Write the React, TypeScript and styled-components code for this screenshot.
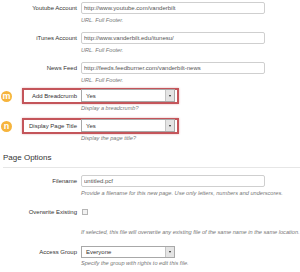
import styled, { createGlobalStyle, css } from 'styled-components';

const GlobalStyle = createGlobalStyle`
  html, body {
    margin: 0;
    padding: 0;
    background: #fff;
  }
  body {
    font-family: "Liberation Sans", Arial, sans-serif;
    width: 300px;
    height: 272px;
    overflow: hidden;
  }
`;

const Page = styled.div`
  width: 300px;
  padding-top: 2px;
`;

const Group = styled.div<{ $after: number }>`
  display: flex;
  flex-direction: column;
  margin-bottom: ${p => p.$after}px;
`;

const Row = styled.div`
  display: flex;
  align-items: center;
`;

const Marker = styled.div`
  width: 22px;
  display: flex;
  align-items: center;
  padding-left: 1px;
  box-sizing: border-box;
`;

const Badge = styled.span`
  width: 11px;
  height: 11px;
  border-radius: 50%;
  background: #f6b43c;
  color: #fff;
  font-size: 9px;
  font-weight: bold;
  line-height: 10px;
  text-align: center;
`;

const Field = styled.div<{ $marked?: boolean; $height?: number }>`
  display: flex;
  align-items: center;
  ${p => p.$height && css`height: ${p.$height}px;`}
  ${p => p.$marked && css`
    padding: 1px 4px 2px 0;
    box-shadow: inset 0 0 0 2px #c4555a, 0 0 2px rgba(196, 85, 90, 0.45);
  `}
`;

const Label = styled.label`
  width: 59px;
  padding-right: 4px;
  box-sizing: border-box;
  text-align: right;
  font-size: 6px;
  color: #333;
  white-space: nowrap;
`;

const TextInput = styled.input`
  width: 184px;
  height: 12px;
  box-sizing: border-box;
  border: 1px solid #cfcfcf;
  border-radius: 2px;
  padding: 0 2px;
  margin: 0;
  font-family: "Liberation Sans", Arial, sans-serif;
  font-size: 6px;
  color: #555;
  background: #fff;
  outline: none;
`;

const Select = styled.div<{ $height: number }>`
  width: 94px;
  height: ${p => p.$height}px;
  box-sizing: border-box;
  border: 1px solid #a8a8a8;
  display: flex;
  align-items: stretch;
  background: #fff;
`;

const SelectValue = styled.span`
  flex: 1;
  padding-left: 4px;
  font-size: 6px;
  color: #333;
  display: flex;
  align-items: center;
`;

const SelectButton = styled.span`
  width: 8px;
  background: #e4e4e4;
  border-left: 1px solid #c4c4c4;
  display: flex;
  align-items: center;
  justify-content: center;
  &::after {
    content: "";
    border-left: 1.5px solid transparent;
    border-right: 1.5px solid transparent;
    border-top: 2px solid #222;
  }
`;

const Checkbox = styled.span`
  width: 6px;
  height: 6px;
  margin-left: 1px;
  border: 1px solid #b5b5b5;
  background: #f2f2f2;
  box-sizing: border-box;
`;

const Help = styled.div<{ $top: number }>`
  margin: ${p => p.$top}px 0 0 81px;
  font-size: 5.6px;
  line-height: 9px;
  font-style: italic;
  color: #777;
  white-space: nowrap;
`;

const Heading = styled.h2`
  margin: 10px 0 7px 3px;
  padding-bottom: 4px;
  border-bottom: 1px solid #e6e6e6;
  font-size: 8px;
  line-height: 10px;
  font-weight: normal;
  color: #333;
`;

function App() {
  return (
    <Page>
      <GlobalStyle />
      <Group $after={7}>
        <Row>
          <Marker />
          <Field>
            <Label>Youtube Account</Label>
            <TextInput readOnly value="http://www.youtube.com/vanderbilt" />
          </Field>
        </Row>
        <Help $top={2}>URL. Full Footer.</Help>
      </Group>
      <Group $after={7}>
        <Row>
          <Marker />
          <Field>
            <Label>iTunes Account</Label>
            <TextInput readOnly value="http://www.vanderbilt.edu/itunesu/" />
          </Field>
        </Row>
        <Help $top={2}>URL. Full Footer.</Help>
      </Group>
      <Group $after={3}>
        <Row>
          <Marker />
          <Field>
            <Label>News Feed</Label>
            <TextInput readOnly value="http://feeds.feedburner.com/vanderbilt-news" />
          </Field>
        </Row>
        <Help $top={2}>URL. Full Footer.</Help>
      </Group>
      <Group $after={5}>
        <Row>
          <Marker><Badge>m</Badge></Marker>
          <Field $marked>
            <Label>Add Breadcrumb</Label>
            <Select $height={13}>
              <SelectValue>Yes</SelectValue>
              <SelectButton />
            </Select>
          </Field>
        </Row>
        <Help $top={0}>Display a breadcrumb?</Help>
      </Group>
      <Group $after={0}>
        <Row>
          <Marker><Badge>n</Badge></Marker>
          <Field $marked>
            <Label>Display Page Title</Label>
            <Select $height={13}>
              <SelectValue>Yes</SelectValue>
              <SelectButton />
            </Select>
          </Field>
        </Row>
        <Help $top={0}>Display the page title?</Help>
      </Group>
      <Heading>Page Options</Heading>
      <Group $after={8}>
        <Row>
          <Marker />
          <Field>
            <Label>Filename</Label>
            <TextInput readOnly value="untitled.pcf" />
          </Field>
        </Row>
        <Help $top={2}>Provide a filename for this new page. Use only letters, numbers and underscores.</Help>
      </Group>
      <Group $after={9}>
        <Row>
          <Marker />
          <Field $height={12}>
            <Label>Overwrite Existing</Label>
            <Checkbox />
          </Field>
        </Row>
        <Help $top={10}>If selected, this file will overwrite any existing file of the same name in the same location.</Help>
      </Group>
      <Group $after={0}>
        <Row>
          <Marker />
          <Field>
            <Label>Access Group</Label>
            <Select $height={12}>
              <SelectValue>Everyone</SelectValue>
              <SelectButton />
            </Select>
          </Field>
        </Row>
        <Help $top={1}>Specify the group with rights to edit this file.</Help>
      </Group>
    </Page>
  );
}

export default App;
